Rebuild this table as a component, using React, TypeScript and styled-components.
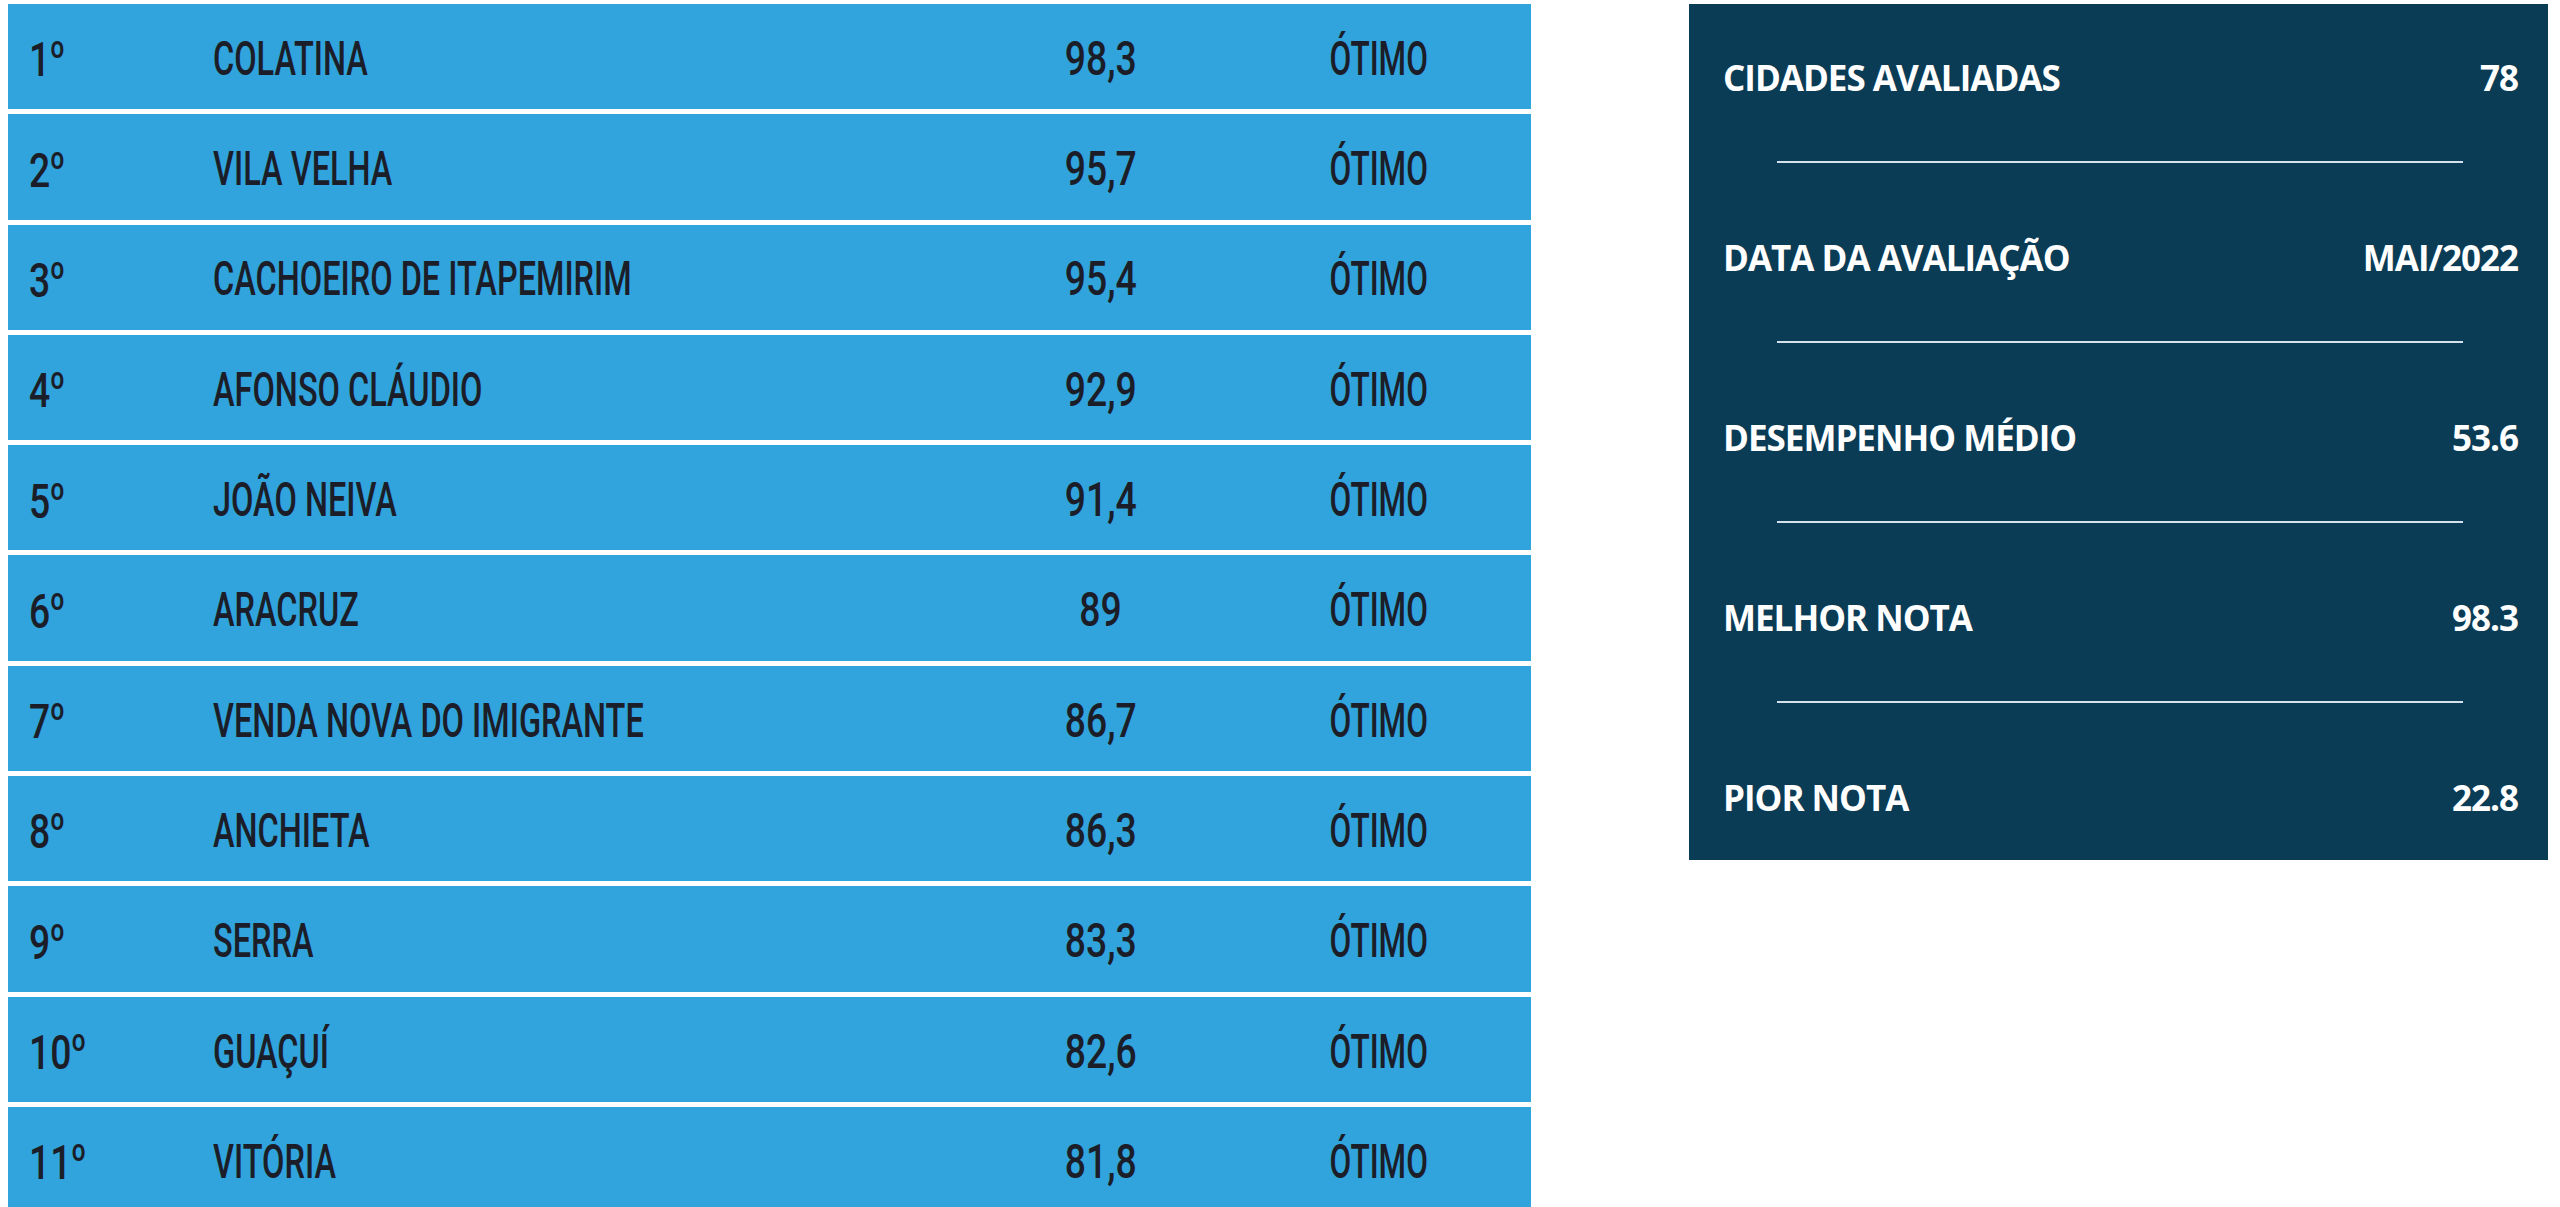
import React from 'react';
import styled, { createGlobalStyle } from 'styled-components';

const GlobalStyle = createGlobalStyle`
  html, body {
    margin: 0;
    padding: 0;
    background: #ffffff;
    overflow: hidden;
  }
`;

interface City {
  rank: number;
  name: string;
  score: string;
}

const cities: City[] = [
  { rank: 1, name: 'COLATINA', score: '98,3' },
  { rank: 2, name: 'VILA VELHA', score: '95,7' },
  { rank: 3, name: 'CACHOEIRO DE ITAPEMIRIM', score: '95,4' },
  { rank: 4, name: 'AFONSO CLÁUDIO', score: '92,9' },
  { rank: 5, name: 'JOÃO NEIVA', score: '91,4' },
  { rank: 6, name: 'ARACRUZ', score: '89' },
  { rank: 7, name: 'VENDA NOVA DO IMIGRANTE', score: '86,7' },
  { rank: 8, name: 'ANCHIETA', score: '86,3' },
  { rank: 9, name: 'SERRA', score: '83,3' },
  { rank: 10, name: 'GUAÇUÍ', score: '82,6' },
  { rank: 11, name: 'VITÓRIA', score: '81,8' },
];

const stats = [
  { label: 'CIDADES AVALIADAS', value: '78' },
  { label: 'DATA DA AVALIAÇÃO', value: 'MAI/2022' },
  { label: 'DESEMPENHO MÉDIO', value: '53.6' },
  { label: 'MELHOR NOTA', value: '98.3' },
  { label: 'PIOR NOTA', value: '22.8' },
];

const Page = styled.div`
  display: flex;
  align-items: flex-start;
  gap: 158px;
  padding: 4px 0 0 8px;
`;

const Ranking = styled.div`
  width: 1523px;
  display: flex;
  flex-direction: column;
  gap: 5px;
  flex-shrink: 0;
`;

const Row = styled.div`
  height: 105.3px;
  background: #31a3dd;
  display: grid;
  grid-template-columns: 184px 1fr 278px 200px;
  align-items: center;
  padding: 5px 52px 0 21px;
  box-sizing: border-box;
  color: #1b1e28;
  font-family: Roboto, 'Liberation Sans', sans-serif;
  font-weight: 500;
  font-size: 48.5px;
  line-height: 1;
  white-space: nowrap;
`;

const Cell = styled.div<{ $align?: 'left' | 'center'; $gapAfter?: number }>`
  text-align: ${(p) => p.$align ?? 'left'};
  padding-right: ${(p) => p.$gapAfter ?? 0}px;
`;

const Condensed = styled.span<{ $scale: number; $origin?: string }>`
  display: inline-block;
  transform: scaleX(${(p) => p.$scale});
  transform-origin: ${(p) => p.$origin ?? 'left center'};
`;

const Ordinal = styled.span`
  font-family: 'Open Sans', sans-serif;
  font-weight: 600;
`;

const Summary = styled.div`
  width: 859px;
  flex-shrink: 0;
  background: #0b3c56;
  box-sizing: border-box;
  padding: 49px 30px 39px 34px;
  display: flex;
  flex-direction: column;
  color: #ffffff;
  font-family: 'Open Sans', sans-serif;
  font-weight: 700;
  font-size: 35px;
  letter-spacing: -1px;
`;

const StatRow = styled.div`
  height: 48px;
  display: flex;
  align-items: center;
  justify-content: space-between;
  white-space: nowrap;
`;

const Divider = styled.div`
  width: 686px;
  height: 2px;
  background: #d3e2ec;
  margin: 60px 0 70px 54px;
`;

export default function App() {
  return (
    <>
      <GlobalStyle />
      <Page>
        <Ranking>
          {cities.map((c) => (
            <Row key={c.rank}>
              <Cell>
                <Condensed $scale={0.77}>
                  {c.rank}
                  <Ordinal>º</Ordinal>
                </Condensed>
              </Cell>
              <Cell>
                <Condensed $scale={0.67}>{c.name}</Condensed>
              </Cell>
              <Cell $align="center" $gapAfter={78}>
                <Condensed $scale={0.77} $origin="center">
                  {c.score}
                </Condensed>
              </Cell>
              <Cell $align="center">
                <Condensed $scale={0.65} $origin="center">
                  ÓTIMO
                </Condensed>
              </Cell>
            </Row>
          ))}
        </Ranking>
        <Summary>
          {stats.map((s, i) => (
            <React.Fragment key={s.label}>
              <StatRow>
                <span>{s.label}</span>
                <span>{s.value}</span>
              </StatRow>
              {i < stats.length - 1 && <Divider />}
            </React.Fragment>
          ))}
        </Summary>
      </Page>
    </>
  );
}
